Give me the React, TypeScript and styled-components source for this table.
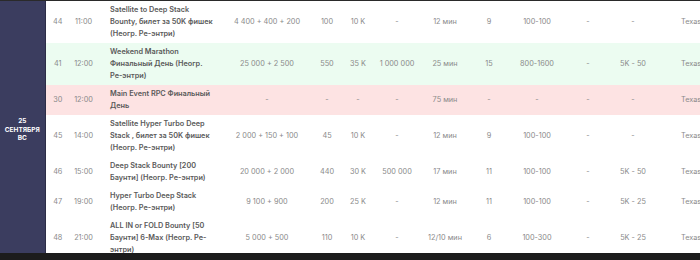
import styled, { createGlobalStyle } from "styled-components";

type Tone = "plain" | "final" | "main";

interface Tournament {
  id: string;
  time: string;
  name: string;
  buyIn: string;
  entries: string;
  stack: string;
  guarantee: string;
  levels: string;
  late: string;
  blinds: string;
  ante: string;
  bounty: string;
  game: string;
  tone: Tone;
}

const tournaments: Tournament[] = [
  {
    id: "44",
    time: "11:00",
    name: "Satellite to Deep Stack Bounty, билет за 50K фишек (Неогр. Ре-энтри)",
    buyIn: "4 400 + 400 + 200",
    entries: "100",
    stack: "10 K",
    guarantee: "-",
    levels: "12 мин",
    late: "9",
    blinds: "100-100",
    ante: "-",
    bounty: "-",
    game: "Texas Hold'em",
    tone: "plain",
  },
  {
    id: "41",
    time: "12:00",
    name: "Weekend Marathon Финальный День (Неогр. Ре-энтри)",
    buyIn: "25 000 + 2 500",
    entries: "550",
    stack: "35 K",
    guarantee: "1 000 000",
    levels: "25 мин",
    late: "15",
    blinds: "800-1600",
    ante: "-",
    bounty: "5K - 50",
    game: "Texas Hold'em",
    tone: "final",
  },
  {
    id: "30",
    time: "12:00",
    name: "Main Event RPC Финальный День",
    buyIn: "-",
    entries: "-",
    stack: "-",
    guarantee: "-",
    levels: "75 мин",
    late: "-",
    blinds: "-",
    ante: "-",
    bounty: "-",
    game: "Texas Hold'em",
    tone: "main",
  },
  {
    id: "45",
    time: "14:00",
    name: "Satellite Hyper Turbo Deep Stack , билет за 50K фишек (Неогр. Ре-энтри)",
    buyIn: "2 000 + 150 + 100",
    entries: "45",
    stack: "10 K",
    guarantee: "-",
    levels: "12 мин",
    late: "9",
    blinds: "100-100",
    ante: "-",
    bounty: "-",
    game: "Texas Hold'em",
    tone: "plain",
  },
  {
    id: "46",
    time: "15:00",
    name: "Deep Stack Bounty [200 Баунти] (Неогр. Ре-энтри)",
    buyIn: "20 000 + 2 000",
    entries: "440",
    stack: "30 K",
    guarantee: "500 000",
    levels: "17 мин",
    late: "11",
    blinds: "100-100",
    ante: "-",
    bounty: "5K - 50",
    game: "Texas Hold'em",
    tone: "plain",
  },
  {
    id: "47",
    time: "19:00",
    name: "Hyper Turbo Deep Stack (Неогр. Ре-энтри)",
    buyIn: "9 100 + 900",
    entries: "200",
    stack: "25 K",
    guarantee: "-",
    levels: "12 мин",
    late: "11",
    blinds: "100-100",
    ante: "-",
    bounty: "5K - 25",
    game: "Texas Hold'em",
    tone: "plain",
  },
  {
    id: "48",
    time: "21:00",
    name: "ALL IN or FOLD Bounty [50 Баунти] 6-Max (Неогр. Ре-энтри)",
    buyIn: "5 000 + 500",
    entries: "110",
    stack: "10 K",
    guarantee: "-",
    levels: "12/10 мин",
    late: "6",
    blinds: "100-300",
    ante: "-",
    bounty: "5K - 25",
    game: "Texas Hold'em",
    tone: "plain",
  },
];

const rowColors: Record<Tone, string> = {
  plain: "#ffffff",
  final: "#ecfcf1",
  main: "#fde3e3",
};

// column widths, left to right (px)
const columns = [45, 25, 27, 127, 86, 34, 28, 50, 46, 42, 54, 48, 42, 120];

const GlobalStyle = createGlobalStyle`
  html, body {
    margin: 0;
    padding: 0;
    background: #ffffff;
    overflow: hidden;
  }
`;

const Page = styled.div`
  width: 700px;
  height: 260px;
  display: flex;
  flex-direction: column;
  overflow: hidden;
  font-family: Inter, "Noto Sans", sans-serif;
`;

const TopEdge = styled.div`
  height: 1px;
  flex: none;
  background: #2a2a2a;
`;

const Scroller = styled.div`
  flex: 1;
  overflow: hidden;
`;

const BottomEdge = styled.div`
  height: 7px;
  flex: none;
  background: #1c1c1c;
`;

const Table = styled.table`
  border-collapse: collapse;
  table-layout: fixed;
  width: ${columns.reduce((a, b) => a + b, 0)}px;
`;

const Row = styled.tr<{ $tone: Tone }>`
  background: ${({ $tone }) => rowColors[$tone]};
`;

const DayCell = styled.td`
  background: #3b3d5f;
  border-right: 1px solid #2c2d47;
  color: #ffffff;
  font-size: 6.5px;
  font-weight: 700;
  line-height: 8.5px;
  text-align: center;
  text-transform: uppercase;
  vertical-align: middle;
  padding: 0 2px;
`;

const Cell = styled.td<{ $align?: "left" | "center" }>`
  padding: 3px 0;
  font-size: 7.3px;
  line-height: 12px;
  color: #8a8a8a;
  text-align: ${({ $align }) => $align ?? "center"};
  vertical-align: middle;
  white-space: nowrap;
  overflow: hidden;
`;

const NameCell = styled.td`
  padding: 3px 8px 3px 13px;
  font-size: 7.3px;
  line-height: 12px;
  font-weight: 600;
  color: #5a5a5a;
  text-align: left;
  vertical-align: middle;
`;

const GameCell = styled(Cell)`
  padding-left: 27px;
`;

export default function App() {
  return (
    <Page>
      <GlobalStyle />
      <TopEdge />
      <Scroller>
        <Table>
          <colgroup>
            {columns.map((w, i) => (
              <col key={i} style={{ width: w }} />
            ))}
          </colgroup>
          <tbody>
            {tournaments.map((t, i) => (
              <Row key={t.id} $tone={t.tone}>
                {i === 0 && (
                  <DayCell rowSpan={tournaments.length}>
                    25
                    <br />
                    Сентября
                    <br />
                    Вс
                  </DayCell>
                )}
                <Cell>{t.id}</Cell>
                <Cell>{t.time}</Cell>
                <NameCell>{t.name}</NameCell>
                <Cell>{t.buyIn}</Cell>
                <Cell>{t.entries}</Cell>
                <Cell>{t.stack}</Cell>
                <Cell>{t.guarantee}</Cell>
                <Cell>{t.levels}</Cell>
                <Cell>{t.late}</Cell>
                <Cell>{t.blinds}</Cell>
                <Cell>{t.ante}</Cell>
                <Cell>{t.bounty}</Cell>
                <GameCell $align="left">{t.game}</GameCell>
              </Row>
            ))}
          </tbody>
        </Table>
      </Scroller>
      <BottomEdge />
    </Page>
  );
}
